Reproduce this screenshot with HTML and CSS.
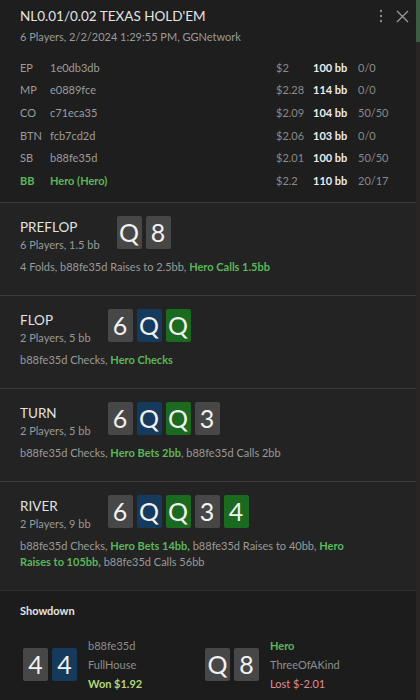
FILE: index.html
```html
<!DOCTYPE html>
<html>
<head>
<meta charset="utf-8">
<link rel="stylesheet" href="styles.css">
</head>
<body>
<div class="app">
  <div class="content">
    <header class="head">
      <div class="title-row">
        <div class="title">NL0.01/0.02 TEXAS HOLD'EM</div>
        <div class="tools">
          <svg class="kebab" width="4" height="14" viewBox="0 0 4 14"><circle cx="2" cy="2" r="1.2" fill="#8a8a8a"/><circle cx="2" cy="7" r="1.2" fill="#8a8a8a"/><circle cx="2" cy="12" r="1.2" fill="#8a8a8a"/></svg>
          <svg class="close" width="13" height="13" viewBox="0 0 13 13"><path d="M1 1L12 12M12 1L1 12" stroke="#9a9a9a" stroke-width="1.3" fill="none"/></svg>
        </div>
      </div>
      <div class="subtitle">6 Players, 2/2/2024 1:29:55 PM, GGNetwork</div>
      <div class="players">
        <div class="row"><span class="pos">EP</span><span class="name">1e0db3db</span><span class="usd">$2</span><span class="bb">100 bb</span><span class="stat">0/0</span></div>
        <div class="row"><span class="pos">MP</span><span class="name">e0889fce</span><span class="usd">$2.28</span><span class="bb">114 bb</span><span class="stat">0/0</span></div>
        <div class="row"><span class="pos">CO</span><span class="name">c71eca35</span><span class="usd">$2.09</span><span class="bb">104 bb</span><span class="stat">50/50</span></div>
        <div class="row"><span class="pos">BTN</span><span class="name">fcb7cd2d</span><span class="usd">$2.06</span><span class="bb">103 bb</span><span class="stat">0/0</span></div>
        <div class="row"><span class="pos">SB</span><span class="name">b88fe35d</span><span class="usd">$2.01</span><span class="bb">100 bb</span><span class="stat">50/50</span></div>
        <div class="row hero"><span class="pos">BB</span><span class="name">Hero (Hero)</span><span class="usd">$2.2</span><span class="bb">110 bb</span><span class="stat">20/17</span></div>
      </div>
    </header>

    <section class="street">
      <div class="street-top">
        <div class="label"><div class="street-name">PREFLOP</div><div class="street-sub">6 Players, 1.5 bb</div></div>
        <div class="cards"><span class="card gray">Q</span><span class="card gray">8</span></div>
      </div>
      <p class="actions">4 Folds, b88fe35d Raises to 2.5bb, <b class="hl">Hero Calls 1.5bb</b></p>
    </section>

    <section class="street">
      <div class="street-top">
        <div class="label"><div class="street-name">FLOP</div><div class="street-sub">2 Players, 5 bb</div></div>
        <div class="cards"><span class="card gray">6</span><span class="card blue">Q</span><span class="card green">Q</span></div>
      </div>
      <p class="actions">b88fe35d Checks, <b class="hl">Hero Checks</b></p>
    </section>

    <section class="street">
      <div class="street-top">
        <div class="label"><div class="street-name">TURN</div><div class="street-sub">2 Players, 5 bb</div></div>
        <div class="cards"><span class="card gray">6</span><span class="card blue">Q</span><span class="card green">Q</span><span class="card gray">3</span></div>
      </div>
      <p class="actions">b88fe35d Checks, <b class="hl">Hero Bets 2bb</b>, b88fe35d Calls 2bb</p>
    </section>

    <section class="street">
      <div class="street-top">
        <div class="label"><div class="street-name">RIVER</div><div class="street-sub">2 Players, 9 bb</div></div>
        <div class="cards"><span class="card gray">6</span><span class="card blue">Q</span><span class="card green">Q</span><span class="card gray">3</span><span class="card green">4</span></div>
      </div>
      <p class="actions">b88fe35d Checks, <b class="hl">Hero Bets 14bb,</b> b88fe35d Raises to 40bb, <b class="hl">Hero Raises to 105bb,</b> b88fe35d Calls 56bb</p>
    </section>

    <section class="showdown">
      <div class="sd-title">Showdown</div>
      <div class="hands">
        <div class="hand">
          <div class="cards"><span class="card gray">4</span><span class="card blue">4</span></div>
          <div class="hand-info"><div class="hn">b88fe35d</div><div class="hr">FullHouse</div><div class="won">Won $1.92</div></div>
        </div>
        <div class="hand">
          <div class="cards"><span class="card gray">Q</span><span class="card gray">8</span></div>
          <div class="hand-info"><div class="hn hero-name">Hero</div><div class="hr">ThreeOfAKind</div><div class="lost">Lost $-2.01</div></div>
        </div>
      </div>
    </section>
  </div>
  <div class="scrollbar"><div class="thumb"></div></div>
</div>
</body>
</html>
```

FILE: styles.css
```css
* { box-sizing: border-box; }
html, body { margin: 0; padding: 0; }
body {
  width: 420px;
  height: 700px;
  overflow: hidden;
  background: #1e1e1e;
  font-family: Lato, "Noto Sans", sans-serif;
  color: #d8d8d8;
}
.app { display: flex; height: 700px; }
.content { flex: 1; min-width: 0; background: #1e1e1e; }
.scrollbar { width: 4px; background: #2a2525; }
.thumb { height: 42px; background: #3c5d43; }

.head { padding: 6px 0 10px 20px; }
.title-row { display: flex; align-items: center; justify-content: space-between; height: 20px; }
.title { font-size: 13.5px; line-height: 20px; color: #e4e4e4; }
.tools { display: flex; align-items: center; gap: 13px; padding-right: 7px; }
.subtitle { margin-top: 2px; font-size: 11px; line-height: 18px; color: #9a9a9a; }

.players { margin-top: 10px; padding-right: 16px; }
.row {
  display: grid;
  grid-template-columns: 30px 1fr 37px 45px 42px;
  height: 22.6px;
  align-items: center;
  font-size: 11px;
  color: #9c9c9c;
}
.row .usd { color: #8a8a8a; }
.row .bb { color: #ececec; font-weight: 700; }
.row .stat { color: #8a8a8a; }
.row.hero .pos, .row.hero .name { color: #5cb65a; font-weight: 700; }

.street {
  background: #222322;
  border-top: 1px solid #3a3b3a;
  padding: 13px 16px 20px 20px;
}
.street-top { display: flex; align-items: flex-start; gap: 17px; }
.label { padding-top: 2px; }
.street-name { font-size: 13.5px; line-height: 18px; color: #e2e2e2; }
.street-sub { font-size: 11px; line-height: 16px; color: #9a9a9a; margin-top: 1px; }

.cards { display: flex; gap: 4px; }
.card {
  width: 25px;
  height: 33px;
  border-radius: 2px;
  display: flex;
  align-items: center;
  justify-content: center;
  font-size: 25px;
  color: #f2f2f2;
}
.card.gray { background: #474747; }
.card.blue { background: #163a5c; }
.card.green { background: #1a6a20; }

.actions { margin: 6px 0 0; max-width: 350px; font-size: 11px; line-height: 16px; color: #9a9a9a; }
.hl { color: #5cb65a; font-weight: 700; }

.showdown {
  background: #1c1c1c;
  border-top: 1px solid #2e2e2e;
  padding: 12px 16px 0 20px;
  height: 113px;
}
.sd-title { font-size: 11px; line-height: 16px; font-weight: 700; color: #e6e6e6; }
.hands { display: flex; margin-top: 17px; padding-left: 3px; }
.hand { display: flex; align-items: center; gap: 11px; width: 182px; }
.hand-info { font-size: 11px; line-height: 19px; color: #8e8e8e; }
.hero-name { color: #5cb65a; font-weight: 700; }
.won { color: #b2d77a; font-weight: 700; }
.lost { color: #e08a92; }
```
